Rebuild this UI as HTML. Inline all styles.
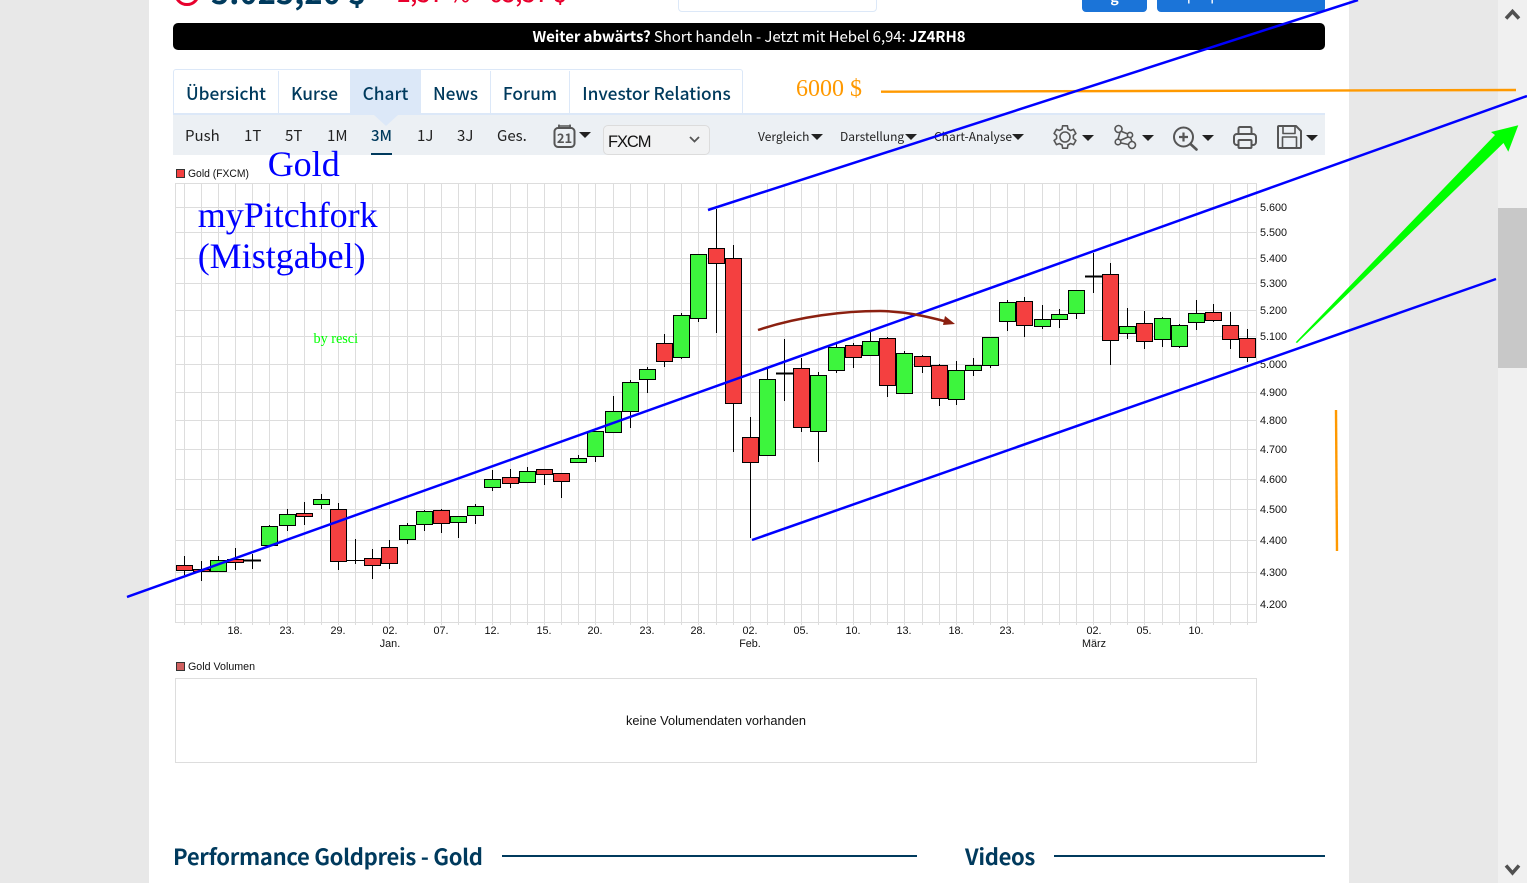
<!DOCTYPE html>
<html lang="de">
<head>
<meta charset="utf-8">
<title>Gold Chart</title>
<style>
html,body{margin:0;padding:0;width:1527px;height:883px;overflow:hidden;background:#e8e8e8}
#page{position:relative;width:1527px;height:883px;overflow:hidden;font-family:"Noto Sans CJK JP","Liberation Sans",sans-serif}
.abs{position:absolute;white-space:nowrap}
#main{position:absolute;left:149px;top:0;width:1200px;height:883px;background:#fff}
#sb{position:absolute;left:1498px;top:0;width:29px;height:883px;background:#f0f0f0}
#thumb{position:absolute;left:1498px;top:208px;width:29px;height:160px;background:#c8c8c8}
.tab{position:absolute;top:71px;height:42px;line-height:43px;text-align:center;font-size:17.3px;color:#003a5d;border-right:1px solid #dce8f8;box-sizing:border-box;font-weight:500}
.tb{position:absolute;top:125px;font-size:15px;line-height:22px;color:#222;white-space:nowrap}
.mn{position:absolute;top:128px;font-size:12px;line-height:18px;color:#222;white-space:nowrap}
h2{margin:0;position:absolute;font-size:22px;line-height:30px;font-weight:700;color:#003a5d;white-space:nowrap;letter-spacing:-.3px}
svg{position:absolute;left:0;top:0}
</style>
</head>
<body>
<div id="page">
<div id="main"></div>
<div id="sb"></div>
<div id="thumb"></div>

<!-- clipped header row -->
<div class="abs" style="left:174px;top:-20px;width:20px;height:20px;border:3px solid #e8002d;border-radius:50%"></div>
<div class="abs" style="left:211px;top:-29px;font-size:31px;line-height:40px;font-weight:700;color:#003a5d">5.025,20 $</div>
<div class="abs" style="left:389px;top:-25px;font-size:23px;line-height:34px;font-weight:500;color:#e8002d">-2,37 %</div>
<div class="abs" style="left:481px;top:-25px;font-size:23px;line-height:34px;font-weight:500;color:#e8002d">-65,37 $</div>
<div class="abs" style="left:600px;top:-15px;font-size:15px;line-height:20px;color:#777">15.03.26</div>
<div class="abs" style="left:678px;top:-10px;width:197px;height:20px;border:1px solid #dce8f8;border-radius:4px;background:#fff"></div>
<div class="abs" style="left:1082px;top:-10px;width:65px;height:22px;background:#1b74d8;border-radius:4px;overflow:hidden;color:#fff;font-size:14px;line-height:14px;text-align:center;font-weight:700">g</div>
<div class="abs" style="left:1157px;top:-12px;width:168px;height:24px;background:#1b74d8;border-radius:4px;overflow:hidden;color:#fff;font-size:15px;line-height:14px;text-align:center">Sparplan-Rechner</div>

<!-- black bar -->
<div class="abs" style="left:173px;top:23px;width:1152px;height:27px;background:#000;border-radius:5px;color:#fff;font-size:15px;line-height:27px;text-align:center;letter-spacing:-.07px"><b>Weiter abwärts?</b> Short handeln - Jetzt mit Hebel 6,94: <b>JZ4RH8</b></div>

<!-- tabs -->
<div class="abs" style="left:173px;top:69px;width:570px;height:46px;box-sizing:border-box;border:1px solid #dce8f8;border-radius:3px 3px 0 0;background:#fff"></div>
<div class="tab" style="left:174px;width:105px">Übersicht</div>
<div class="tab" style="left:279px;width:71px;border-right:0">Kurse</div>
<div class="tab" style="left:350px;width:71px;top:70px;height:43px;line-height:45px;background:#dce8f8;border-right:0">Chart</div>
<div class="tab" style="left:421px;width:70px">News</div>
<div class="tab" style="left:491px;width:79px">Forum</div>
<div class="tab" style="left:570px;width:173px;padding-left:1px">Investor Relations</div>

<!-- toolbar -->
<div class="abs" style="left:173px;top:113px;width:1152px;height:42px;background:#ecf0f4;border-top:2px solid #dce8f8;box-sizing:border-box"></div>
<div class="abs" style="left:374px;top:115px;width:0;height:0;border-left:12px solid transparent;border-right:12px solid transparent;border-top:11px solid #dce8f8"></div>
<div class="tb" style="left:185px">Push</div>
<div class="tb" style="left:244px">1T</div>
<div class="tb" style="left:285px">5T</div>
<div class="tb" style="left:327px">1M</div>
<div class="tb" style="left:371px;color:#003a5d;font-weight:500">3M</div>
<div class="abs" style="left:371px;top:153px;width:21px;height:2px;background:#003a5d"></div>
<div class="tb" style="left:417px">1J</div>
<div class="tb" style="left:457px">3J</div>
<div class="tb" style="left:497px">Ges.</div>
<div class="abs" style="left:603px;top:125px;width:107px;height:30px;box-sizing:border-box;border:1px solid #dcdcdc;border-radius:5px;background:#f1f2f3"></div>
<div class="abs" style="left:608px;top:132px;font:16.5px/20px 'Liberation Sans',sans-serif;color:#111;letter-spacing:-1.1px">FXCM</div>
<div class="mn" style="left:758px">Vergleich</div>
<div class="mn" style="left:840px">Darstellung</div>
<div class="mn" style="left:934px">Chart-Analyse</div>

<h2 style="left:173px;top:841px">Performance Goldpreis - Gold</h2>
<h2 style="left:965px;top:841px">Videos</h2>
<div class="abs" style="left:502px;top:855px;width:415px;height:2px;background:#003a5d"></div>
<div class="abs" style="left:1054px;top:855px;width:271px;height:2px;background:#003a5d"></div>

<svg width="1527" height="883" viewBox="0 0 1527 883" xmlns="http://www.w3.org/2000/svg">
<!-- toolbar icons -->
<g fill="none" stroke="#555" stroke-width="1.6" stroke-linejoin="round">
<rect x="554.500" y="128" width="20" height="19" rx="3.500" stroke-width="2"/>
<path d="M559 124.500v4M570 124.500v4M558 126h13" stroke-width="1.500"/>
<path transform="translate(1065 137)" d="M-2.400-11.200H2.400L2.900-8 5.480-6.510 8.500-7.680 10.900-3.520 8.380-1.490V1.490L10.900 3.520 8.500 7.680 5.480 6.510 2.900 8 2.400 11.200H-2.400L-2.900 8-5.480 6.510-8.500 7.680-10.900 3.520-8.380 1.490V-1.490L-10.900-3.520-8.500-7.680-5.480-6.510-2.900-8Z"/>
<circle cx="1065" cy="137" r="5"/>
<circle cx="1118.500" cy="129" r="3.500"/><circle cx="1130" cy="135" r="2.600"/><circle cx="1118" cy="142" r="2.800"/><circle cx="1132" cy="145" r="3.500"/>
<path d="M1121.500 131.500 1128 134M1120 132.500 1118 139M1128 137 1120 140.500M1130.500 137.500 1132 141.500M1121 143 1128.500 144.500"/>
<circle cx="1183.500" cy="137" r="9.500" stroke-width="2"/>
<path d="M1190.500 144 1196.500 149.500" stroke-width="2.600" stroke-linecap="round"/>
<path d="M1183.500 132.500v9M1179 137h9" stroke-width="2.200"/>
<rect x="1234" y="134" width="22" height="11" rx="3" stroke-width="2"/>
<path d="M1238.500 134v-5.500a1.500 1.500 0 0 1 1.500-1.500h10a1.500 1.500 0 0 1 1.500 1.500V134" stroke-width="2"/>
<rect x="1238.500" y="140" width="13" height="8" rx="1" fill="#ecf0f4" stroke-width="2"/>
<path d="M1278 127a1 1 0 0 1 1-1h17l5 5v16a1 1 0 0 1-1 1h-21a1 1 0 0 1-1-1Z" stroke-width="2"/>
<path d="M1283 126.500v7h12v-7M1282.500 148v-11h14v11" stroke-width="1.600"/>
</g>
<text x="564.500" y="143" font-family="'Noto Sans CJK JP',sans-serif" font-size="13" font-weight="700" fill="#555" text-anchor="middle">21</text>
<g fill="#222">
<path d="M579 132h12l-6 6Z"/>
<path d="M811 134h12l-6 6Z"/><path d="M905 134h12l-6 6Z"/><path d="M1012 134h12l-6 6Z"/>
<path d="M1082 135h12l-6 6Z"/><path d="M1142 135h12l-6 6Z"/><path d="M1202 135h12l-6 6Z"/><path d="M1306 135h12l-6 6Z"/>
</g>
<path d="M690 137l4.500 4.500 4.500-4.500" fill="none" stroke="#555" stroke-width="1.800"/>

<!-- grid -->
<g fill="none" stroke="#dddddd" stroke-width="1" shape-rendering="crispEdges">
<path d="M175.500 183.500H1256.500V622.500H175.500Z"/>
<path d="M175 207.500H1257M175 232.500H1257M175 258.500H1257M175 283.500H1257M175 310.500H1257M175 336.500H1257M175 364.500H1257M175 392.500H1257M175 420.500H1257M175 449.500H1257M175 479.500H1257M175 509.500H1257M175 540.500H1257M175 572.500H1257M175 604.500H1257"/>
<path d="M184.500 183V625M201.500 183V625M218.500 183V625M235.500 183V625M252.500 183V625M269.500 183V625M287.500 183V625M304.500 183V625M321.500 183V625M338.500 183V625M355.500 183V625M372.500 183V625M389.500 183V625M407.500 183V625M424.500 183V625M441.500 183V625M458.500 183V625M475.500 183V625M492.500 183V625M510.500 183V625M527.500 183V625M544.500 183V625M561.500 183V625M578.500 183V625M595.500 183V625M613.500 183V625M630.500 183V625M647.500 183V625M664.500 183V625M681.500 183V625M698.500 183V625M716.500 183V625M733.500 183V625M750.500 183V625M767.500 183V625M784.500 183V625M801.500 183V625M818.500 183V625M836.500 183V625M853.500 183V625M870.500 183V625M887.500 183V625M904.500 183V625M922.500 183V625M939.500 183V625M956.500 183V625M973.500 183V625M990.500 183V625M1007.500 183V625M1024.500 183V625M1042.500 183V625M1059.500 183V625M1076.500 183V625M1093.500 183V625M1110.500 183V625M1127.500 183V625M1144.500 183V625M1162.500 183V625M1179.500 183V625M1196.500 183V625M1213.500 183V625M1230.500 183V625M1247.500 183V625"/>
<rect x="175.500" y="678.500" width="1081" height="84"/>
</g>

<!-- wicks -->
<path fill="none" stroke="#000" stroke-width="1" shape-rendering="crispEdges" d="M184.500 556V575M201.500 561V581M218.500 556V571M235.500 548V570M252.500 554V569M269.500 525V546M287.500 509V531M304.500 502V525M321.500 494V509M338.500 503V570M355.500 539V564M372.500 549V579M389.500 540V569M407.500 523V544M424.500 510V531M441.500 509V533M458.500 516V538M475.500 504V524M492.500 470V491M510.500 469V488M527.500 467V482M544.500 469V485M561.500 473V498M578.500 455V463M595.500 431V462M613.500 396V432M630.500 380V428M647.500 367V393M664.500 334V367M681.500 313V359M698.500 254V322M716.500 209V333M733.500 245V452M750.500 417V538M767.500 367V455M784.500 339V401M801.500 358V432M818.500 372V462M836.500 342V373M853.500 343V368M870.500 332V355M887.500 337V397M904.500 351V394M922.500 355V373M939.500 364V406M956.500 361V405M973.500 358V376M990.500 337V368M1007.500 300V331M1024.500 297V337M1042.500 305V329M1059.500 309V328M1076.500 290V319M1093.500 253V293M1110.500 263V365M1127.500 308V339M1144.500 311V349M1162.500 317V347M1179.500 324V348M1196.500 300V330M1213.500 304V322M1230.500 312V349M1247.500 329V362"/>
<path fill="none" stroke="#000" stroke-width="2" shape-rendering="crispEdges" d="M244 560.500H261M776 373.500H793M1085 276.500H1102"/>
<path fill="none" stroke="#000" stroke-width="1" shape-rendering="crispEdges" d="M347 560.500H364"/>

<!-- red bodies -->
<g fill="#f44040" stroke="#000" stroke-width="1" shape-rendering="crispEdges">
<rect x="176.500" y="565.500" width="16" height="5"/>
<rect x="193.500" y="569.500" width="16" height="2"/>
<rect x="227.500" y="559.500" width="16" height="3"/>
<rect x="296.500" y="513.500" width="16" height="3"/>
<rect x="330.500" y="509.500" width="16" height="52"/>
<rect x="364.500" y="558.500" width="16" height="7"/>
<rect x="381.500" y="547.500" width="16" height="16"/>
<rect x="433.500" y="510.500" width="16" height="13"/>
<rect x="502.500" y="477.500" width="16" height="6"/>
<rect x="536.500" y="469.500" width="16" height="5"/>
<rect x="553.500" y="473.500" width="16" height="8"/>
<rect x="656.500" y="343.500" width="16" height="18"/>
<rect x="708.500" y="248.500" width="16" height="15"/>
<rect x="725.500" y="258.500" width="16" height="145"/>
<rect x="742.500" y="437.500" width="16" height="25"/>
<rect x="793.500" y="368.500" width="16" height="59"/>
<rect x="845.500" y="345.500" width="16" height="12"/>
<rect x="879.500" y="338.500" width="16" height="47"/>
<rect x="914.500" y="356.500" width="16" height="10"/>
<rect x="931.500" y="365.500" width="16" height="33"/>
<rect x="1016.500" y="301.500" width="16" height="24"/>
<rect x="1102.500" y="274.500" width="16" height="66"/>
<rect x="1136.500" y="323.500" width="16" height="18"/>
<rect x="1205.500" y="312.500" width="16" height="8"/>
<rect x="1222.500" y="325.500" width="16" height="14"/>
<rect x="1239.500" y="338.500" width="16" height="19"/>
</g>
<!-- green bodies -->
<g fill="#3df53d" stroke="#000" stroke-width="1" shape-rendering="crispEdges">
<rect x="210.500" y="560.500" width="16" height="11"/>
<rect x="261.500" y="526.500" width="16" height="19"/>
<rect x="279.500" y="514.500" width="16" height="11"/>
<rect x="313.500" y="499.500" width="16" height="5"/>
<rect x="399.500" y="525.500" width="16" height="14"/>
<rect x="416.500" y="511.500" width="16" height="13"/>
<rect x="450.500" y="516.500" width="16" height="6"/>
<rect x="467.500" y="506.500" width="16" height="9"/>
<rect x="484.500" y="479.500" width="16" height="8"/>
<rect x="519.500" y="471.500" width="16" height="11"/>
<rect x="570.500" y="458.500" width="16" height="4"/>
<rect x="587.500" y="431.500" width="16" height="25"/>
<rect x="605.500" y="411.500" width="16" height="21"/>
<rect x="622.500" y="382.500" width="16" height="29"/>
<rect x="639.500" y="369.500" width="16" height="10"/>
<rect x="673.500" y="315.500" width="16" height="42"/>
<rect x="690.500" y="254.500" width="16" height="64"/>
<rect x="759.500" y="379.500" width="16" height="76"/>
<rect x="810.500" y="375.500" width="16" height="56"/>
<rect x="828.500" y="347.500" width="16" height="23"/>
<rect x="862.500" y="341.500" width="16" height="14"/>
<rect x="896.500" y="353.500" width="16" height="40"/>
<rect x="948.500" y="370.500" width="16" height="29"/>
<rect x="965.500" y="365.500" width="16" height="5"/>
<rect x="982.500" y="337.500" width="16" height="28"/>
<rect x="999.500" y="302.500" width="16" height="19"/>
<rect x="1034.500" y="319.500" width="16" height="7"/>
<rect x="1051.500" y="314.500" width="16" height="5"/>
<rect x="1068.500" y="290.500" width="16" height="23"/>
<rect x="1119.500" y="326.500" width="16" height="7"/>
<rect x="1154.500" y="318.500" width="16" height="21"/>
<rect x="1171.500" y="325.500" width="16" height="21"/>
<rect x="1188.500" y="313.500" width="16" height="9"/>
</g>

<!-- legends -->
<rect x="176.500" y="169.500" width="8" height="8" fill="#f44040" stroke="#333" stroke-width="1" shape-rendering="crispEdges"/>
<rect x="176.500" y="662.500" width="8" height="8" fill="#d06060" stroke="#333" stroke-width="1" shape-rendering="crispEdges"/>
<g font-family="'Liberation Sans',sans-serif" font-size="10.800" fill="#111">
<text x="188" y="177" textLength="61" lengthAdjust="spacingAndGlyphs">Gold (FXCM)</text>
<text x="188" y="670" textLength="67" lengthAdjust="spacingAndGlyphs">Gold Volumen</text>
<text x="716" y="725" font-size="12.800" text-anchor="middle">keine Volumendaten vorhanden</text>
<text x="1260" y="211">5.600</text><text x="1260" y="236">5.500</text><text x="1260" y="262">5.400</text><text x="1260" y="287">5.300</text><text x="1260" y="314">5.200</text><text x="1260" y="340">5.100</text><text x="1260" y="368">5.000</text><text x="1260" y="396">4.900</text><text x="1260" y="424">4.800</text><text x="1260" y="453">4.700</text><text x="1260" y="483">4.600</text><text x="1260" y="513">4.500</text><text x="1260" y="544">4.400</text><text x="1260" y="576">4.300</text><text x="1260" y="608">4.200</text>
<g text-anchor="middle">
<text x="235" y="634">18.</text><text x="287" y="634">23.</text><text x="338" y="634">29.</text><text x="390" y="634">02.</text><text x="390" y="647">Jan.</text><text x="441" y="634">07.</text><text x="492" y="634">12.</text><text x="544" y="634">15.</text><text x="595" y="634">20.</text><text x="647" y="634">23.</text><text x="698" y="634">28.</text><text x="750" y="634">02.</text><text x="750" y="647">Feb.</text><text x="801" y="634">05.</text><text x="853" y="634">10.</text><text x="904" y="634">13.</text><text x="956" y="634">18.</text><text x="1007" y="634">23.</text><text x="1094" y="634">02.</text><text x="1094" y="647">März</text><text x="1144" y="634">05.</text><text x="1196" y="634">10.</text>
</g>
</g>

<!-- annotations -->
<g font-family="'Liberation Serif',serif">
<text x="267.700" y="176" font-size="36" fill="#0000ff">Gold</text>
<text x="197.700" y="227" font-size="36" fill="#0000ff">myPitchfork</text>
<text x="197.700" y="268" font-size="36" fill="#0000ff">(Mistgabel)</text>
<text x="313.500" y="343" font-size="14.200" fill="#00ff00">by resci</text>
<text x="796" y="96" font-size="24" fill="#ff9900">6000 $</text>
</g>
<g fill="none">
<path d="M881 91.700 1516 90" stroke="#ff9900" stroke-width="2.400"/>
<path d="M1336 410 1337 551" stroke="#ff9900" stroke-width="2.400"/>
<path d="M127 597 1527 96" stroke="#0000ff" stroke-width="2.500"/>
<path d="M708 210 1358 0" stroke="#0000ff" stroke-width="2.500"/>
<path d="M752 540 1496 279" stroke="#0000ff" stroke-width="2.500"/>
<path d="M758 330C800 316 845 311 880 311 905 311.500 925 316 946 321.500" stroke="#8b2010" stroke-width="2.500"/>
</g>
<path d="M955 324 945 316 943 325Z" fill="#8b2010"/>
<path d="M1295.700 342.300 1495 135 1491 132 1518.300 125.300 1508.300 151.700 1503.500 143 1297 343Z" fill="#00ff00"/>

<!-- scrollbar chevrons -->
<path d="M1506 18.500 1512.500 11.500 1519 18.500" fill="none" stroke="#505050" stroke-width="3.500"/>
<path d="M1506 865.500 1512.500 873 1519 865.500" fill="none" stroke="#505050" stroke-width="3.500"/>
</svg>
</div>
</body>
</html>
